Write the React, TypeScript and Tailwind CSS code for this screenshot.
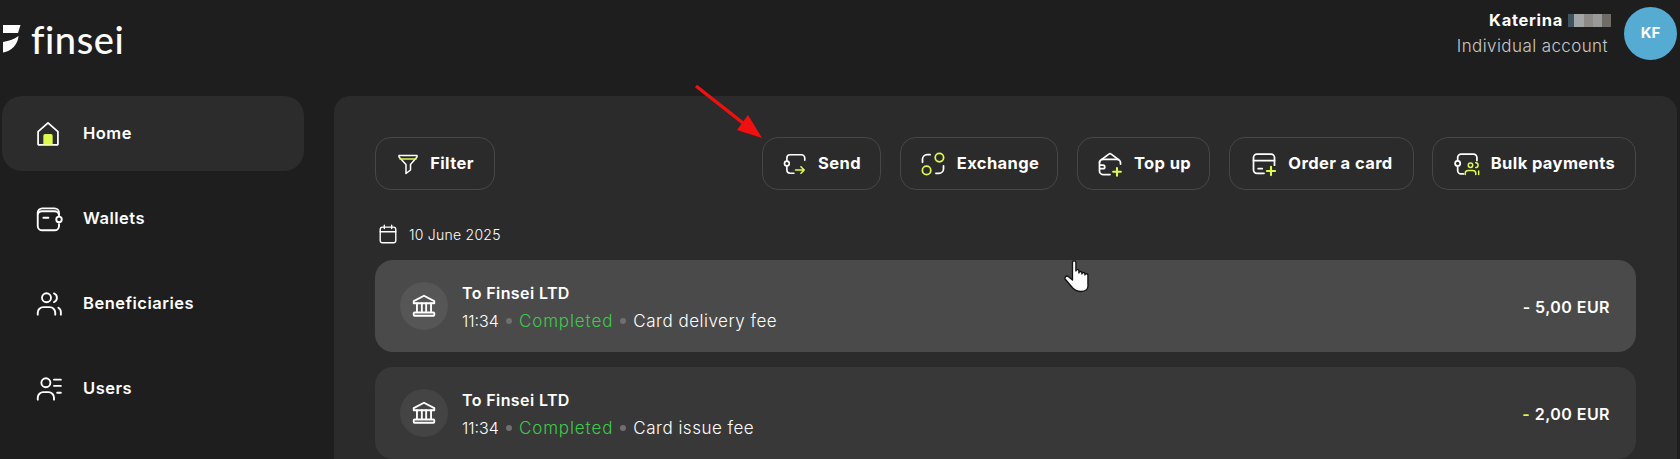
import React from "react";

const LIME = "#dcfb4e";

const Stroke: React.FC<{ size?: number; children: React.ReactNode }> = ({ size = 24, children }) => (
    <svg width={size} height={size} viewBox="0 0 24 24" fill="none" stroke="#fff" strokeWidth={1.5} strokeLinecap="round" strokeLinejoin="round" className="shrink-0">
        {children}
    </svg>
);

const HomeIcon = () => (
    <Stroke size={28}>
        <path d="M12 2.5 L20.5 10 V20.5 a0.8 0.8 0 0 1 -0.8 0.8 H4.3 a0.8 0.8 0 0 1 -0.8 -0.8 V10 Z" />
        <path d="M8 21 V13.5 a1.5 1.5 0 0 1 1.5 -1.5 h5 a1.5 1.5 0 0 1 1.5 1.5 V21 Z" fill={LIME} stroke="none" />
    </Stroke>
);

const WalletIcon = () => (
    <Stroke size={30}>
        <path d="M20 8.5 V7 a3.5 3.5 0 0 0 -3.5 -3.5 H6.5 A3.5 3.5 0 0 0 3 7 V17.5 A3.5 3.5 0 0 0 6.5 21 H16.5 A3.5 3.5 0 0 0 20 17.5 V16" />
        <path d="M3 8 A3.5 3.5 0 0 1 6.5 5.8 H16.5 A3.5 3.5 0 0 1 20 9" />
        <path d="M7.5 11 H11.5" />
        <circle cx="20" cy="12.3" r="2.2" />
    </Stroke>
);

const PeopleIcon = () => (
    <Stroke size={30}>
        <circle cx="10" cy="7" r="3.6" />
        <path d="M3 20.5 V19 a4.5 4.5 0 0 1 4.5 -4.5 h5 a4.5 4.5 0 0 1 4.5 4.5 V20.5" />
        <path d="M16 3.5 a3.8 3.8 0 0 1 0 7" />
        <path d="M19.5 15 a4 4 0 0 1 2 3.5 V20.5" />
    </Stroke>
);

const UsersIcon = () => (
    <Stroke size={30}>
        <circle cx="9.5" cy="7" r="3.6" />
        <path d="M3 20.5 V19 a4.5 4.5 0 0 1 4.5 -4.5 h4 a4.5 4.5 0 0 1 4.5 4.5 V20.5" />
        <path d="M16 4.5 H21.5" />
        <path d="M16 9.5 H21.5" />
        <path d="M18.5 15 H21.5" />
    </Stroke>
);

const FilterIcon = () => (
    <Stroke size={24}>
        <path d="M3 3.5 H21 V5 L14.5 12.5 V18 L10 21.5 V12.5 L3 5 Z" />
        <path d="M4 7 H20" stroke={LIME} />
    </Stroke>
);

const SendIcon = () => (
    <Stroke size={26}>
        <path d="M21 8.5 V6.5 a3 3 0 0 0 -3 -3 H7.5 a3 3 0 0 0 -3 3 V9" />
        <circle cx="4.5" cy="11.5" r="2.2" />
        <path d="M4.5 14 V17.5 a3 3 0 0 0 3 3 H11" />
        <path d="M12.5 17.5 H20.5 M17.5 14.5 L20.5 17.5 L17.5 20.5" stroke={LIME} />
    </Stroke>
);

const ExchangeIcon = () => (
    <Stroke size={28}>
        <circle cx="17.5" cy="6.5" r="3.6" stroke={LIME} />
        <circle cx="6.5" cy="17.5" r="3.6" stroke={LIME} />
        <path d="M3 10.5 V8 a4 4 0 0 1 4 -4 h2.5" />
        <path d="M21 13.5 V16 a4 4 0 0 1 -4 4 h-2.5" />
    </Stroke>
);

const TopUpIcon = () => (
    <Stroke size={28}>
        <path d="M5 8 L11 3.5 a1.5 1.5 0 0 1 2 0 L19 8" />
        <path d="M3 10.5 a3 3 0 0 1 3 -2.5 H18 a3 3 0 0 1 3 3 V12" />
        <path d="M3 10.5 V18 a3 3 0 0 0 3 3 H12" />
        <path d="M3.5 13 H6 a1.2 1.2 0 0 1 0 3 H3.5" />
        <path d="M18 15.5 V22 M14.7 18.7 H21.3" stroke={LIME} strokeWidth={1.8} />
    </Stroke>
);

const CardIcon = () => (
    <Stroke size={28}>
        <path d="M21 13 V6.5 a3 3 0 0 0 -3 -3 H6 a3 3 0 0 0 -3 3 V17 a3 3 0 0 0 3 3 H12" />
        <path d="M3 9 H21" />
        <path d="M7 16 H10.5" />
        <path d="M18 14.5 V21.5 M14.5 18 H21.5" stroke={LIME} strokeWidth={1.8} />
    </Stroke>
);

const BulkIcon = () => (
    <Stroke size={28}>
        <path d="M20.5 9 V6.5 a3 3 0 0 0 -3 -3 H7 a3 3 0 0 0 -3 3 V9" />
        <circle cx="4" cy="11.5" r="2.2" />
        <path d="M4 14 V17.5 a3 3 0 0 0 3 3 H9" />
        <g stroke={LIME} strokeWidth={1.3}>
            <circle cx="15" cy="13" r="1.9" />
            <path d="M10.5 21 V20 a2.5 2.5 0 0 1 2.5 -2.5 h4 a2.5 2.5 0 0 1 2.5 2.5 V21" />
            <path d="M19.5 11 a2 2 0 0 1 0 4 M22 18 V21" />
        </g>
    </Stroke>
);

const CalendarIcon = () => (
    <Stroke size={22}>
        <rect x="3.5" y="4.5" width="17" height="17" rx="2.5" />
        <path d="M3.5 9.5 H20.5 M8 2.5 V6 M16 2.5 V6" />
    </Stroke>
);

const BankIcon = () => (
    <svg width={26} height={26} viewBox="0 0 24 24" fill="none" stroke="#fff" strokeWidth={1.7} strokeLinecap="round" strokeLinejoin="round">
        <path d="M12 2.5 L21.5 7.5 V9.5 H2.5 V7.5 Z" />
        <path d="M5.5 9.5 V17 M10 9.5 V17 M14 9.5 V17 M18.5 9.5 V17" />
        <rect x="2.5" y="18" width="19" height="3" rx="0.8" />
    </svg>
);

const NAV = [
    { label: "Home", icon: <HomeIcon />, active: true },
    { label: "Wallets", icon: <WalletIcon /> },
    { label: "Beneficiaries", icon: <PeopleIcon /> },
    { label: "Users", icon: <UsersIcon /> },
];

const ACTIONS = [
    { label: "Send", icon: <SendIcon />, width: "w-[119px]" },
    { label: "Exchange", icon: <ExchangeIcon />, width: "w-[158px]" },
    { label: "Top up", icon: <TopUpIcon />, width: "w-[133px]" },
    { label: "Order a card", icon: <CardIcon />, width: "w-[185px]" },
    { label: "Bulk payments", icon: <BulkIcon />, width: "w-[204px] -ml-px" },
];

const ActionButton: React.FC<{ label: string; icon: React.ReactNode; width: string }> = ({ label, icon, width }) => (
    <button className={`${width} h-[53px] flex items-center justify-center gap-[10px] rounded-[16px] border border-[#474747] text-white text-[16.5px] tracking-[0.4px] font-bold`}>
        {icon}
        <span>{label}</span>
    </button>
);

const Tx: React.FC<{ note: string; amount: string; hover?: boolean; limeDash?: boolean }> = ({ note, amount, hover, limeDash }) => (
    <div className={`h-[92px] shrink-0 flex items-center justify-between pl-[25px] pr-[26px] rounded-[18px] ${hover ? "bg-[#4a4a4a]" : "bg-[#383838]"}`}>
        <div className="flex items-center gap-[14px]">
            <div className={`w-[48px] h-[48px] rounded-full flex items-center justify-center ${hover ? "bg-[#565656]" : "bg-[#444444]"}`}>
                <BankIcon />
            </div>
            <div className="flex flex-col gap-[7px] pt-[3px]">
                <div className="text-[16px] leading-[20px] tracking-[0.4px] font-semibold text-white">To Finsei LTD</div>
                <div className="flex items-center text-[17px] leading-[22px] font-light text-white">
                    <span className="text-[16px]">11:34</span>
                    <span className="w-[6px] h-[6px] rounded-full bg-[#6f6f6f] mx-[7px]" />
                    <span className="text-[#3ecb4b] tracking-[0.9px]">Completed</span>
                    <span className="w-[6px] h-[6px] rounded-full bg-[#6f6f6f] mx-[7px]" />
                    <span className="tracking-[0.5px]">{note}</span>
                </div>
            </div>
        </div>
        <div className="text-[16px] tracking-[0.45px] font-semibold text-white pt-[2px]">
            <span className={limeDash ? "text-[#dcfb4e]" : ""}>-</span> {amount}
        </div>
    </div>
);

export default function App() {
    return (
        <div className="relative w-[1680px] h-[459px] overflow-hidden bg-[#1e1e1e] text-white font-['Inter',sans-serif]">
            <header className="h-[96px] flex items-start justify-between">
                <div className="flex items-center gap-[10px] pl-[3px] pt-[20px]">
                    <svg width={18} height={28} viewBox="0 0 18 28" fill="#fff">
                        <path d="M0 0 H17.5 L15 8 H0 Z" />
                        <path d="M0 17 C6 16 12 14 15.5 11 C15 19 9 26 0 27.5 Z" />
                    </svg>
                    <span className="text-[38px] leading-[38px] font-medium tracking-[0.6px] font-['Lato',sans-serif]">finsei</span>
                </div>
                <div className="flex items-start gap-[15px] pt-[7px] pr-[3px]">
                    <div className="flex flex-col items-end pt-[3px] pr-[1px]">
                        <div className="flex items-center gap-[5px] h-[20px] -mr-[3px]">
                            <span className="text-[16.5px] tracking-[0.7px] font-bold text-white">Katerina</span>
                            <span className="flex h-[13px]">
                                <span className="w-[6px] bg-[#3f5560]" />
                                <span className="w-[10px] bg-[#a2a6a8]" />
                                <span className="w-[9px] bg-[#8d8a88]" />
                                <span className="w-[9px] bg-[#999999]" />
                                <span className="w-[9px] bg-[#6f6c66]" />
                            </span>
                        </div>
                        <div className="mt-[5px] text-[17px] leading-[22px] tracking-[0.4px] font-light text-[#c9c9c9]">Individual account</div>
                    </div>
                    <div className="w-[53px] h-[53px] rounded-full bg-[#56abd3] flex items-center justify-center text-[15px] font-bold">KF</div>
                </div>
            </header>

            <div className="flex h-[363px]">
                <nav className="w-[302px] ml-[2px] flex flex-col gap-[10px] shrink-0">
                    {NAV.map((item) => (
                        <div key={item.label} className={`h-[75px] shrink-0 flex items-center rounded-[20px] ${item.active ? "bg-[#2c2c2c]" : ""}`}>
                            <div className="w-[81px] pl-[32px] shrink-0 flex">{item.icon}</div>
                            <span className="text-[16.5px] tracking-[0.5px] font-semibold text-white">{item.label}</span>
                        </div>
                    ))}
                </nav>
                <main className="flex-1 ml-[30px] mr-[3px] rounded-t-[16px] bg-[#2b2b2b] pt-[41px] pl-[41px] pr-[41px] flex flex-col overflow-hidden">
                    <div className="flex items-center justify-between shrink-0">
                        <button className="w-[120px] h-[53px] flex items-center justify-center gap-[10px] rounded-[16px] border border-[#474747] text-[16.5px] tracking-[0.4px] font-bold">
                            <FilterIcon />
                            <span>Filter</span>
                        </button>
                        <div className="flex gap-[19px]">
                            {ACTIONS.map((a) => (
                                <ActionButton key={a.label} {...a} />
                            ))}
                        </div>
                    </div>
                    <div className="flex items-center gap-[10px] h-[22px] mt-[33px] pl-[2px] shrink-0">
                        <CalendarIcon />
                        <span className="text-[14px] tracking-[0.25px] font-light text-white">10 June 2025</span>
                    </div>
                    <div className="flex flex-col gap-[15px] mt-[15px]">
                        <Tx note="Card delivery fee" amount="5,00 EUR" hover />
                        <Tx note="Card issue fee" amount="2,00 EUR" limeDash />
                    </div>
                </main>
            </div>

            {/* annotation arrow and cursor from the screenshot */}
            <svg className="absolute left-[690px] top-[80px]" width={80} height={62} viewBox="0 0 80 62" fill="none">
                <path d="M6 6 L58 47" stroke="#f01010" strokeWidth={3.5} />
                <path d="M72 58 L47 50 L58 35 Z" fill="#f01010" />
            </svg>
            <svg className="absolute left-[1064px] top-[259px]" width={28} height={34} viewBox="0 0 28 34">
                <path d="M8.5 3.5 a1.7 1.7 0 0 1 3.4 0 V12 a1.5 1.5 0 0 1 3 0.3 V14 a1.5 1.5 0 0 1 3 0 V15 a1.5 1.5 0 0 1 3 0 V16 a1.5 1.5 0 0 1 3 0.5 V25 C24.5 30 22 32.5 17 32.5 C12 32.5 9.5 30.5 7 27 L1.5 20.5 a2 2 0 0 1 3 -2.7 L8.5 21 Z" fill="#fff" stroke="#111" strokeWidth={1.3} strokeLinejoin="round" />
            </svg>
        </div>
    );
}
